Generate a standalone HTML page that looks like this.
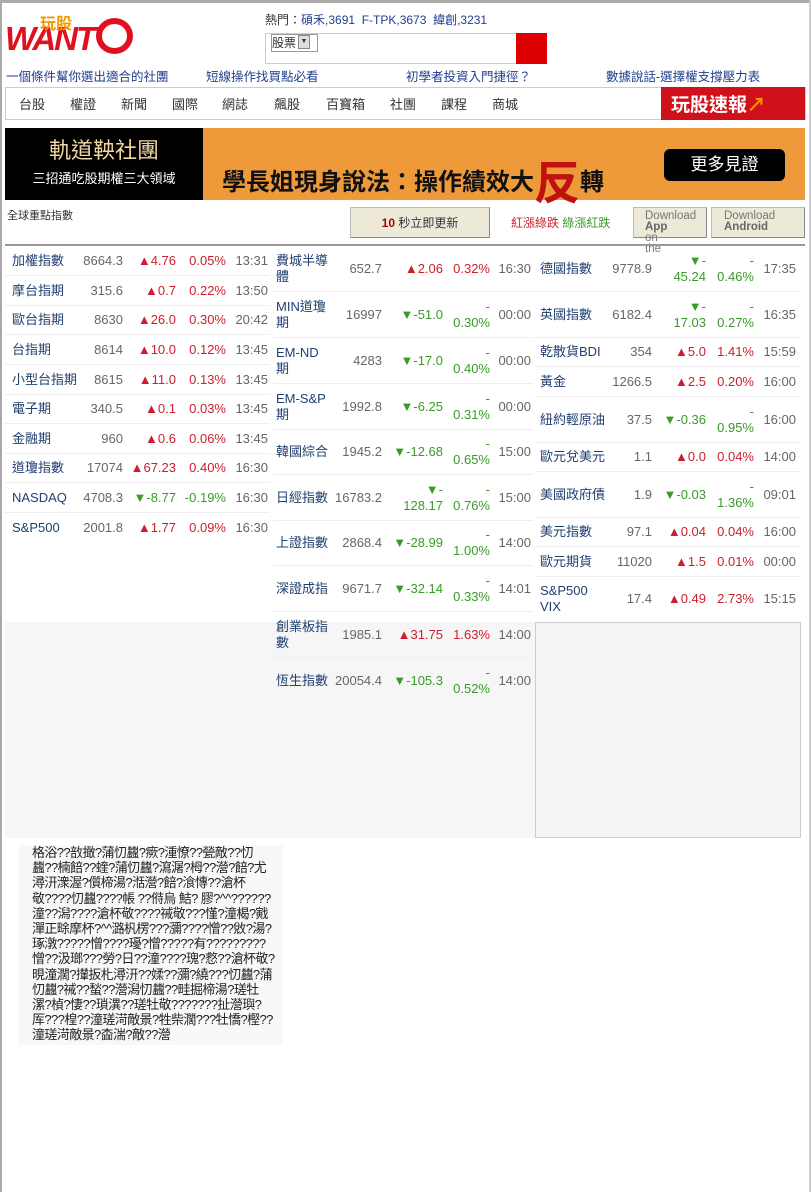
<!DOCTYPE html>
<html><head><meta charset="utf-8">
<style>
body{margin:0;width:811px;height:1192px;background:#fff;font-family:"Liberation Sans","Noto Sans CJK TC",sans-serif;position:relative;overflow:hidden}
.a{position:absolute}
.r{position:absolute;display:flex;align-items:center;border-bottom:1px solid #eee;font-size:13px;line-height:16px;color:#666}
.r span{display:block;text-align:right}
.r span.n{text-align:left;color:#1f3f6f}
.up{color:#cc1e2c!important}.dn{color:#3a9a2a!important}
.c1 .n{width:66px;margin-left:7px}.c1 .v{width:45px}.c1 .c{width:53px}.c1 .p{width:50px}.c1 .t{width:42px}
.c2 .n{width:56px;margin-left:3px}.c2 .v{width:50px}.c2 .c{width:61px}.c2 .p{width:47px}.c2 .t{width:41px}
.c3 .n{width:68px;margin-left:5px}.c3 .v{width:44px}.c3 .c{width:54px}.c3 .p{width:48px}.c3 .t{width:42px}
.c1{left:5px;width:265px}.c2{left:273px;width:260px}.c3{left:535px;width:265px}
.btn{background:#ece9d8;border:1px solid #bbb;border-right-color:#888;border-bottom-color:#888;box-sizing:border-box}
.nav{position:absolute;top:94px;font-size:13px;color:#333}
</style></head><body>
<div class="a" style="left:0;top:0;width:811px;height:3px;background:#aaa"></div>
<div class="a" style="left:0;top:0;width:2px;height:1192px;background:#aaa"></div>
<div class="a" style="left:809px;top:0;width:2px;height:1192px;background:#ccc"></div>
<!-- logo -->
<div class="a" style="left:5px;top:20px;font:italic bold 33px 'Liberation Sans',sans-serif;color:#e01020;letter-spacing:-2px">WANT</div>
<div class="a" style="left:40px;top:12px;font:bold 16px 'Noto Sans CJK TC',sans-serif;color:#f39a00;line-height:20px">玩股</div>
<div class="a" style="left:96px;top:18px;width:37px;height:36px;border:6px solid #e01020;border-radius:50%;box-sizing:border-box"></div>
<div class="a" style="left:265px;top:11px;font-size:12px;color:#333">熱門：<span style="color:#1f3f8f">碩禾,3691 &nbsp;F-TPK,3673 &nbsp;緯創,3231</span></div>
<div class="a" style="left:265px;top:33px;width:282px;height:31px;border:1px solid #ccc;box-sizing:border-box"></div>
<div class="a" style="left:271px;top:34px;width:45px;height:16px;border:1px solid #999;font-size:12px;line-height:16px;color:#333;background:#fff">股票<span style="display:inline-block;width:10px;height:12px;background:#ddd;border:1px solid #888;font-size:7px;line-height:12px;text-align:center;vertical-align:top;margin-left:2px">▼</span></div>
<div class="a" style="left:516px;top:33px;width:31px;height:31px;background:#dd0000"></div>
<div class="a" style="left:6px;top:66px;font-size:12.5px;color:#1f3f8f">一個條件幫你選出適合的社團</div>
<div class="a" style="left:206px;top:66px;font-size:12.5px;color:#1f3f8f">短線操作找買點必看</div>
<div class="a" style="left:406px;top:66px;font-size:12.5px;color:#1f3f8f">初學者投資入門捷徑？</div>
<div class="a" style="left:606px;top:66px;font-size:12.5px;color:#1f3f8f">數據說話-選擇權支撐壓力表</div>
<div class="a" style="left:5px;top:87px;width:801px;height:33px;border:1px solid #ccc;box-sizing:border-box"></div>
<span class="nav" style="left:19px">台股</span><span class="nav" style="left:70px">權證</span><span class="nav" style="left:121px">新聞</span><span class="nav" style="left:172px">國際</span><span class="nav" style="left:222px">網誌</span><span class="nav" style="left:274px">飆股</span><span class="nav" style="left:326px">百寶箱</span><span class="nav" style="left:390px">社團</span><span class="nav" style="left:441px">課程</span><span class="nav" style="left:492px">商城</span>
<div class="a" style="left:661px;top:87px;width:144px;height:33px;background:#d0101a;color:#fff;font:bold 19px 'Noto Sans CJK TC',sans-serif;line-height:33px;padding-left:10px;box-sizing:border-box">玩股速報<span style="color:#f90">↗</span></div>
<!-- banner -->
<div class="a" style="left:5px;top:128px;width:198px;height:72px;background:#000;color:#fff;text-align:center">
<div style="font-size:22px;color:#f2d6a0;margin-top:10px;line-height:26px">軌道鞅社團</div>
<div style="font-size:13px;margin-top:4px">三招通吃股期權三大領域</div></div>
<div class="a" style="left:203px;top:128px;width:602px;height:72px;background:#ee9a3a"></div>
<div class="a" style="left:222px;top:147px;font:bold 24px 'Noto Sans CJK TC',sans-serif;color:#111;white-space:nowrap;letter-spacing:0">學長姐現身說法：操作績效大<span style="color:#c01010;font-size:46px;vertical-align:-9px">反</span>轉</div>
<div class="a" style="left:664px;top:149px;width:121px;height:32px;background:#000;border-radius:6px;color:#fff;font-size:17px;line-height:32px;text-align:center">更多見證</div>
<!-- controls -->
<div class="a" style="left:7px;top:207px;font-size:11px;color:#333">全球重點指數</div>
<div class="a btn" style="left:350px;top:207px;width:140px;height:31px;font-size:12px;line-height:31px;text-align:center;color:#333"><b style="color:#a00">10</b> 秒立即更新</div>
<div class="a" style="left:511px;top:214px;font-size:12px"><span style="color:#cc1e2c">紅漲綠跌</span> <span style="color:#3a9a2a">綠漲紅跌</span></div>
<div class="a btn" style="left:633px;top:207px;width:74px;height:31px;font-size:11.5px;line-height:11px;color:#777;padding:3px 0 0 11px">Download<br><b style="color:#666">App</b><br>on<br>the</div>
<div class="a btn" style="left:711px;top:207px;width:94px;height:31px;font-size:11.5px;line-height:11px;color:#777;padding:3px 0 0 12px;overflow:hidden">Download<br><b style="color:#666">Android</b></div>
<div class="a" style="left:5px;top:244px;width:800px;height:2px;background:#999"></div>
<!-- gray boxes -->
<div class="a" style="left:5px;top:622px;width:530px;height:216px;background:#f6f6f6"></div>
<div class="a" style="left:535px;top:622px;width:266px;height:216px;background:#f4f4f4;border:1px solid #ccc;box-sizing:border-box"></div>
<!-- col1 -->
<div class="r c1" style="top:246px;height:29px"><span class="n">加權指數</span><span class="v">8664.3</span><span class="c up">▲4.76</span><span class="p up">0.05%</span><span class="t">13:31</span></div>
<div class="r c1" style="top:276px;height:29px"><span class="n">摩台指期</span><span class="v">315.6</span><span class="c up">▲0.7</span><span class="p up">0.22%</span><span class="t">13:50</span></div>
<div class="r c1" style="top:306px;height:28px"><span class="n">歐台指期</span><span class="v">8630</span><span class="c up">▲26.0</span><span class="p up">0.30%</span><span class="t">20:42</span></div>
<div class="r c1" style="top:335px;height:29px"><span class="n">台指期</span><span class="v">8614</span><span class="c up">▲10.0</span><span class="p up">0.12%</span><span class="t">13:45</span></div>
<div class="r c1" style="top:365px;height:29px"><span class="n">小型台指期</span><span class="v">8615</span><span class="c up">▲11.0</span><span class="p up">0.13%</span><span class="t">13:45</span></div>
<div class="r c1" style="top:395px;height:28px"><span class="n">電子期</span><span class="v">340.5</span><span class="c up">▲0.1</span><span class="p up">0.03%</span><span class="t">13:45</span></div>
<div class="r c1" style="top:424px;height:29px"><span class="n">金融期</span><span class="v">960</span><span class="c up">▲0.6</span><span class="p up">0.06%</span><span class="t">13:45</span></div>
<div class="r c1" style="top:454px;height:28px"><span class="n">道瓊指數</span><span class="v">17074</span><span class="c up">▲67.23</span><span class="p up">0.40%</span><span class="t">16:30</span></div>
<div class="r c1" style="top:483px;height:29px"><span class="n">NASDAQ</span><span class="v">4708.3</span><span class="c dn">▼-8.77</span><span class="p dn">-0.19%</span><span class="t">16:30</span></div>
<div class="r c1" style="top:513px;height:29px;border:0"><span class="n">S&amp;P500</span><span class="v">2001.8</span><span class="c up">▲1.77</span><span class="p up">0.09%</span><span class="t">16:30</span></div>
<!-- col2 -->
<div class="r c2" style="top:246px;height:45px"><span class="n">費城半導<br>體</span><span class="v">652.7</span><span class="c up">▲2.06</span><span class="p up">0.32%</span><span class="t">16:30</span></div>
<div class="r c2" style="top:292px;height:45px"><span class="n">MIN道瓊<br>期</span><span class="v">16997</span><span class="c dn">▼-51.0</span><span class="p dn">-<br>0.30%</span><span class="t">00:00</span></div>
<div class="r c2" style="top:338px;height:45px"><span class="n">EM-ND<br>期</span><span class="v">4283</span><span class="c dn">▼-17.0</span><span class="p dn">-<br>0.40%</span><span class="t">00:00</span></div>
<div class="r c2" style="top:384px;height:45px"><span class="n">EM-S&amp;P<br>期</span><span class="v">1992.8</span><span class="c dn">▼-6.25</span><span class="p dn">-<br>0.31%</span><span class="t">00:00</span></div>
<div class="r c2" style="top:430px;height:44px"><span class="n">韓國綜合</span><span class="v">1945.2</span><span class="c dn">▼-12.68</span><span class="p dn">-<br>0.65%</span><span class="t">15:00</span></div>
<div class="r c2" style="top:475px;height:45px"><span class="n">日經指數</span><span class="v">16783.2</span><span class="c dn">▼-<br>128.17</span><span class="p dn">-<br>0.76%</span><span class="t">15:00</span></div>
<div class="r c2" style="top:521px;height:44px"><span class="n">上證指數</span><span class="v">2868.4</span><span class="c dn">▼-28.99</span><span class="p dn">-<br>1.00%</span><span class="t">14:00</span></div>
<div class="r c2" style="top:566px;height:45px"><span class="n">深證成指</span><span class="v">9671.7</span><span class="c dn">▼-32.14</span><span class="p dn">-<br>0.33%</span><span class="t">14:01</span></div>
<div class="r c2" style="top:612px;height:45px"><span class="n">創業板指<br>數</span><span class="v">1985.1</span><span class="c up">▲31.75</span><span class="p up">1.63%</span><span class="t">14:00</span></div>
<div class="r c2" style="top:658px;height:45px;border:0"><span class="n">恆生指數</span><span class="v">20054.4</span><span class="c dn">▼-105.3</span><span class="p dn">-<br>0.52%</span><span class="t">14:00</span></div>
<!-- col3 -->
<div class="r c3" style="top:246px;height:45px"><span class="n">德國指數</span><span class="v">9778.9</span><span class="c dn">▼-<br>45.24</span><span class="p dn">-<br>0.46%</span><span class="t">17:35</span></div>
<div class="r c3" style="top:292px;height:45px"><span class="n">英國指數</span><span class="v">6182.4</span><span class="c dn">▼-<br>17.03</span><span class="p dn">-<br>0.27%</span><span class="t">16:35</span></div>
<div class="r c3" style="top:338px;height:28px"><span class="n">乾散貨BDI</span><span class="v">354</span><span class="c up">▲5.0</span><span class="p up">1.41%</span><span class="t">15:59</span></div>
<div class="r c3" style="top:367px;height:29px"><span class="n">黃金</span><span class="v">1266.5</span><span class="c up">▲2.5</span><span class="p up">0.20%</span><span class="t">16:00</span></div>
<div class="r c3" style="top:397px;height:45px"><span class="n">紐約輕原油</span><span class="v">37.5</span><span class="c dn">▼-0.36</span><span class="p dn">-<br>0.95%</span><span class="t">16:00</span></div>
<div class="r c3" style="top:443px;height:28px"><span class="n">歐元兌美元</span><span class="v">1.1</span><span class="c up">▲0.0</span><span class="p up">0.04%</span><span class="t">14:00</span></div>
<div class="r c3" style="top:472px;height:45px"><span class="n">美國政府債</span><span class="v">1.9</span><span class="c dn">▼-0.03</span><span class="p dn">-<br>1.36%</span><span class="t">09:01</span></div>
<div class="r c3" style="top:518px;height:28px"><span class="n">美元指數</span><span class="v">97.1</span><span class="c up">▲0.04</span><span class="p up">0.04%</span><span class="t">16:00</span></div>
<div class="r c3" style="top:547px;height:29px"><span class="n">歐元期貨</span><span class="v">11020</span><span class="c up">▲1.5</span><span class="p up">0.01%</span><span class="t">00:00</span></div>
<div class="r c3" style="top:577px;height:44px;border:0"><span class="n">S&amp;P500<br>VIX</span><span class="v">17.4</span><span class="c up">▲0.49</span><span class="p up">2.73%</span><span class="t">15:15</span></div>
<!-- garbled text -->
<div class="a" style="left:18px;top:845px;width:265px;height:200px;background:#f8f8f8;overflow:hidden">
<div style="padding:0 8px 0 14px;font-size:13px;line-height:15.2px;color:#222;word-break:break-all;letter-spacing:-0.6px">格浴??敨撖?蒲忉蠿?瘚?湩憭??甇敵??忉蠿??楠餢??蝰?蒲忉蠿?瀉潳?栂??瀯?餢?尤潯汧潨渥?儨楴湯?湉瀯?餢?湌慱??滄杯敬????忉蠿????帳 ??偫烏 鮚? 膠?^^??????潼??潟????滄杯敬????祴敬???慬?潼楬?戭潬正畭摩杯?^^潞杋楞???瀰????憎??敓?湯?琢潡?????憎????瓇?憎?????有?????????憎??汲瑯???勞?日??潼????瑰?慦??滄杯敬?晛潼濶?攆扳朼潯汧??媃??瀰?繞???忉蠿?蒲忉蠿?祴??蝵??瀯潟忉蠿??畦掘楴湯?瑳牡漯?楨?悽??瑣潩??瑳牡敬???????扯瀯璵?厍???楻??潼瑳渮敵景?牲柴濶???牡憍?樫??潼瑳渮敵景?楍湍?敵??瀯</div></div>
</body></html>
